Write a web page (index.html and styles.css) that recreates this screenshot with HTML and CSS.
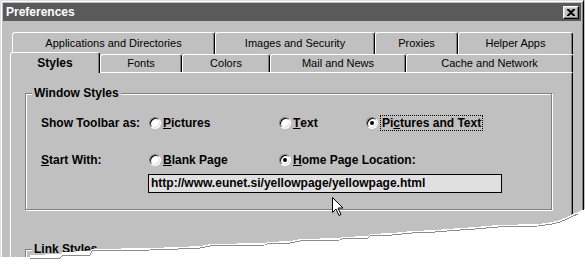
FILE: index.html
```html
<!DOCTYPE html>
<html><head>
<meta charset="utf-8">
<title>Preferences</title>
<link rel="stylesheet" href="styles.css">
</head>
<body>
<div class="window">
  <div class="titlebar">
    <span class="title">Preferences</span>
    <span class="close"><svg width="8" height="7" viewBox="0 0 8 7"><path d="M0 0h2l2 2 2-2h2v1L5.2 3.5 8 6v1H6L4 5 2 7H0V6l2.8-2.5L0 1z"/></svg></span>
  </div>
  <div class="sheet">
    <div class="tabrow back">
      <div class="tab t-apps">Applications and Directories</div>
      <div class="tab t-images">Images and Security</div>
      <div class="tab t-proxies">Proxies</div>
      <div class="tab t-helpers">Helper Apps</div>
    </div>
    <div class="tabrow front">
      <div class="tab selected t-styles">Styles</div>
      <div class="tab t-fonts">Fonts</div>
      <div class="tab t-colors">Colors</div>
      <div class="tab t-mail">Mail and News</div>
      <div class="tab t-cache">Cache and Network</div>
    </div>
    <div class="panel">
      <div class="group">
        <div class="legend">Window Styles</div>
        <div class="row first">
          <span class="label">Show Toolbar as:</span>
          <span class="option c1"><i class="radio"></i><u>P</u>ictures</span>
          <span class="option c2"><i class="radio"></i><u>T</u>ext</span>
          <span class="option"><i class="radio on"></i><span class="focus">Pi<u>c</u>tures and Text</span></span>
        </div>
        <div class="row">
          <span class="label"><u>S</u>tart With:</span>
          <span class="option c1"><i class="radio"></i><u>B</u>lank Page</span>
          <span class="option"><i class="radio on"></i><u>H</u>ome Page Location:</span>
        </div>
        <div class="url-row">
          <div class="url">http://www.eunet.si/yellowpage/yellowpage.html</div>
        </div>
      </div>
      <div class="group link">
        <div class="legend">Link Styles</div>
      </div>
    </div>
  </div>
</div>
<svg class="cursor" width="12" height="19" viewBox="0 0 12 19"><path d="M0.5 0.5v15l3.5-3.5 3 6.5 2-1-3-6.5h5z" fill="#fff" stroke="#000"/></svg>
<svg class="tear" width="585" height="265" viewBox="0 0 585 265" shape-rendering="crispEdges">
  <polygon fill="#fff" points="0,257 30,257 30,255 60,254 62,252 90,251 92,249 150,248 178,247 200,246 210,244 265,243 267,242 290,241 300,239 340,238 342,237 368,236 370,234 392,233 412,231 435,230 460,228 475,227 498,225 538,224 552,222 560,220 567,217 573,214 578,212 585,209 585,265 0,265"/>
  <polyline fill="none" stroke="#8c8c8c" points="30,259 60,258 62,256 90,255 92,251 150,250 178,249 200,248 210,246 265,245 267,244 290,243 300,241 340,240 342,239 368,238 370,236 392,235 412,233 435,232 460,230 475,229 498,227 538,226 552,224 560,222 567,219 573,216 578,214"/>
</svg>
</body>
</html>
```

FILE: styles.css
```css
html, body { margin: 0; padding: 0; }
body { width: 585px; height: 265px; overflow: hidden; position: relative; background: #c0c0c0; font-family: "Liberation Sans", Arial, sans-serif; color: #000; }

.window { box-sizing: border-box; width: 584px; height: 265px; padding: 2px; background: #c0c0c0; border: 1px solid; border-color: #dfdfdf #000 #000 #dfdfdf; box-shadow: inset 1px 1px #fff, inset -1px -1px #808080; overflow: hidden; }

.titlebar { height: 18px; background: #5a5a5a; display: flex; align-items: center; justify-content: space-between; padding: 0 2px 0 3px; }
.title { color: #fff; font-weight: bold; font-size: 12px; }
.close { box-sizing: border-box; width: 16px; height: 13px; margin-top: 1px; display: flex; align-items: center; justify-content: center; background: #c0c0c0; border: 1px solid; border-color: #fff #000 #000 #fff; box-shadow: inset -1px -1px #808080, inset 1px 1px #dfdfdf; }

.sheet { padding: 11px 8px 0 7px; }
.tabrow { display: flex; }
.tabrow.back { margin-left: 2px; margin-bottom: -2px; }
.tabrow.front { height: 20px; align-items: flex-end; }

.tab { box-sizing: border-box; flex: none; height: 18px; line-height: 17px; font-size: 11px; text-align: center; white-space: nowrap; background: #c0c0c0; border: 1px solid; border-bottom: 0; border-color: #fff #000 transparent #fff; border-radius: 3px 3px 0 0; box-shadow: inset -1px 0 #808080; }
.back .tab { height: 22px; line-height: 21px; }
.tab.selected { position: relative; z-index: 1; height: 21px; line-height: 20px; margin-bottom: -1px; font-size: 12px; font-weight: bold; }

.t-apps { width: 203px; }
.t-images { width: 160px; }
.t-proxies { width: 83px; }
.t-helpers { width: 115px; }
.t-styles { width: 90px; }
.t-fonts { width: 82px; }
.t-colors { width: 88px; }
.t-mail { width: 136px; }
.t-cache { width: 167px; }

.panel { box-sizing: border-box; height: 190px; background: #c0c0c0; border-top: 1px solid #fff; border-left: 1px solid #fff; border-right: 1px solid #000; box-shadow: inset -1px 0 #808080; padding-top: 20px; font-size: 12px; font-weight: bold; }

.group { box-sizing: border-box; width: 527px; margin-left: 14px; border: 1px solid #808080; box-shadow: inset 1px 1px #fff, 1px 1px #fff; padding: 0 0 16px 15px; }
.group.link { margin-top: 39px; height: 12px; padding-bottom: 0; }
.legend { width: fit-content; margin: -8px 0 0 -9px; padding: 0 2px; line-height: 14px; background: #c0c0c0; }

.row { display: flex; align-items: center; height: 16px; margin-top: 21px; }
.row.first { margin-top: 15px; }
.label { width: 108px; flex: none; }
.option { display: flex; align-items: center; flex: none; }
.option.c1 { width: 130px; }
.option.c2 { width: 87px; }

.radio { box-sizing: border-box; width: 12px; height: 12px; margin-right: 2px; border-radius: 50%; background: #fff; border: 1px solid; border-color: #808080 #fff #fff #808080; box-shadow: inset 1px 1px #000, inset -1px -1px #dfdfdf; display: flex; align-items: center; justify-content: center; }
.radio.on::after { content: ""; width: 4px; height: 4px; border-radius: 50%; background: #000; }

.focus { border: 1px dotted #000; padding: 0 1px; line-height: 14px; }

.url-row { margin-top: 6px; padding-left: 107px; }
.url { box-sizing: border-box; width: 354px; height: 19px; line-height: 17px; padding-left: 2px; background: #e0e0e0; border: 1px solid #000; }

.cursor { position: absolute; left: 332px; top: 197px; }
.tear { position: absolute; left: 0; top: 0; }
```
